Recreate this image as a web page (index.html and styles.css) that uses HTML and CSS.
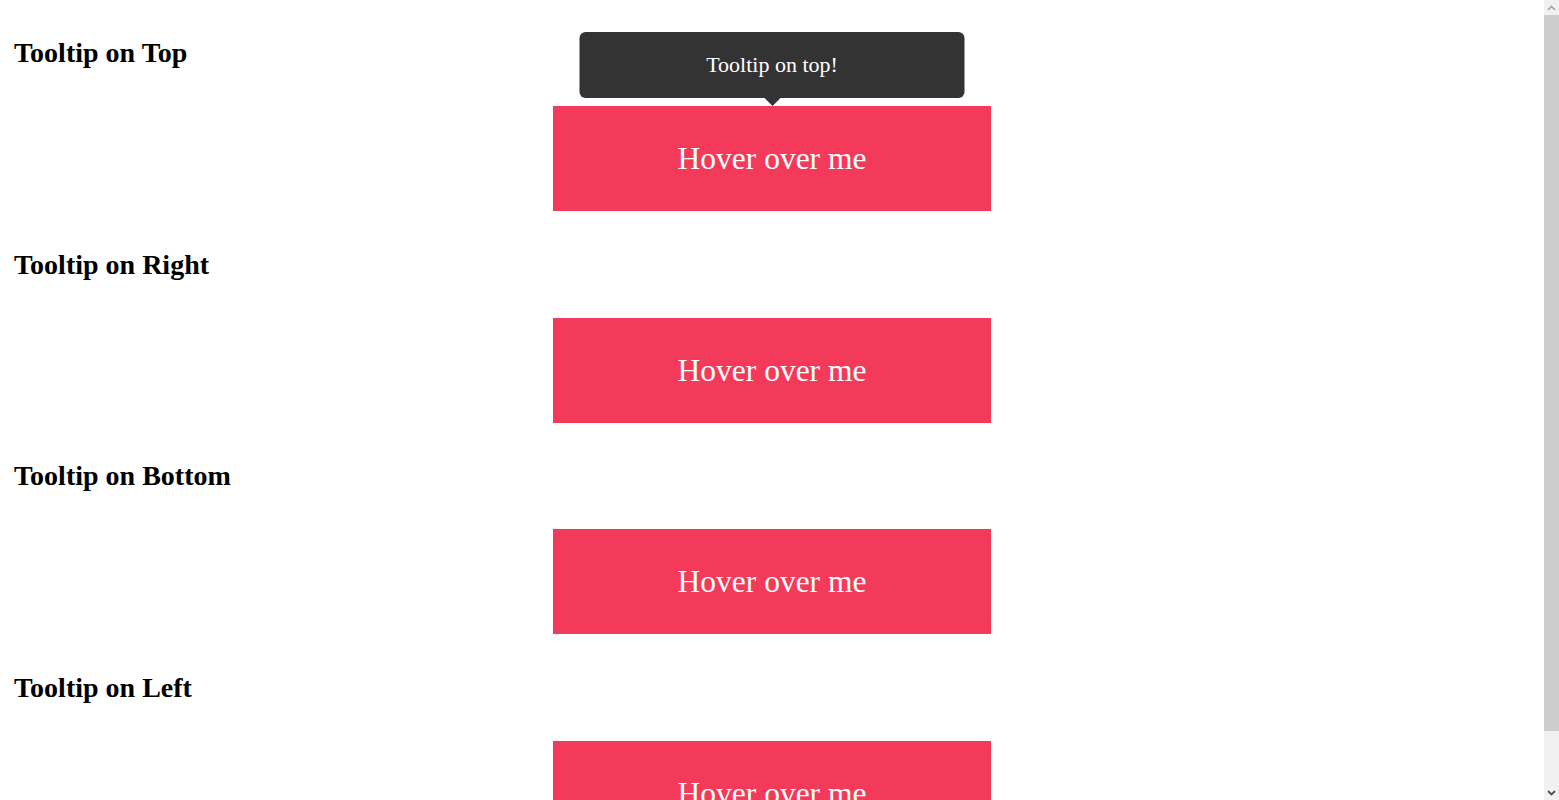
FILE: index.html
```html
<!DOCTYPE html>
<html lang="en">
<head>
<meta charset="utf-8">
<title>Tooltips</title>
<link rel="stylesheet" href="styles.css">
</head>
<body>
<div class="page">
  <section class="section">
    <h2 class="title">Tooltip on Top</h2>
    <div class="btn">
      Hover over me
      <div class="tip tip-top">Tooltip on top!</div>
    </div>
  </section>
  <section class="section">
    <h2 class="title">Tooltip on Right</h2>
    <div class="btn">Hover over me</div>
  </section>
  <section class="section">
    <h2 class="title">Tooltip on Bottom</h2>
    <div class="btn">Hover over me</div>
  </section>
  <section class="section">
    <h2 class="title">Tooltip on Left</h2>
    <div class="btn">Hover over me</div>
  </section>
</div>
<div class="scrollbar" aria-hidden="true">
  <div class="sb-arrow sb-up">
    <svg width="9" height="6" viewBox="0 0 9 6"><path d="M1 5 L4.5 1.5 L8 5" fill="none" stroke="#a3a3a3" stroke-width="1.6"/></svg>
  </div>
  <div class="sb-thumb"></div>
  <div class="sb-rest"></div>
  <div class="sb-arrow sb-down">
    <svg width="9" height="6" viewBox="0 0 9 6"><path d="M1 1 L4.5 4.5 L8 1" fill="none" stroke="#505050" stroke-width="1.8"/></svg>
  </div>
</div>
</body>
</html>
```
FILE: styles.css
```css
html, body {
  margin: 0;
  padding: 0;
  background: #ffffff;
}

body {
  font-family: "Liberation Serif", "Times New Roman", serif;
  color: #000000;
  padding-right: 15px;
}

.page {
  display: flex;
  flex-direction: column;
  padding: 38px 14px 0;
}

.section {
  display: flex;
  flex-direction: column;
  gap: 38px;
  padding-bottom: 38.67px;
}

.title {
  margin: 0;
  font-size: 28px;
  line-height: 30px;
  font-weight: bold;
}

.btn {
  position: relative;
  align-self: center;
  width: 438px;
  height: 105px;
  background: #f33a5a;
  color: #ffffff;
  font-size: 31.5px;
  display: flex;
  align-items: center;
  justify-content: center;
  padding-top: 1px;
  box-sizing: border-box;
}

.tip {
  position: absolute;
  width: 385px;
  height: 66px;
  background: #333333;
  color: #ffffff;
  border-radius: 6px;
  font-size: 22px;
  display: flex;
  align-items: center;
  justify-content: center;
}

.tip-top {
  left: 50%;
  bottom: calc(100% + 8px);
  transform: translateX(-50%);
}

.tip-top::after {
  content: "";
  position: absolute;
  top: 100%;
  left: 50%;
  margin-left: -8px;
  border-width: 8px 8px 0;
  border-style: solid;
  border-color: #333333 transparent transparent;
}

.scrollbar {
  position: fixed;
  top: 0;
  right: 0;
  width: 15px;
  height: 100vh;
  background: #f1f1f1;
  display: flex;
  flex-direction: column;
}

.sb-arrow {
  height: 15px;
  display: flex;
  align-items: center;
  justify-content: center;
  flex: none;
}

.sb-thumb {
  height: 716px;
  background: #cdcdcd;
  flex: none;
}

.sb-rest {
  flex: 1;
}
```
